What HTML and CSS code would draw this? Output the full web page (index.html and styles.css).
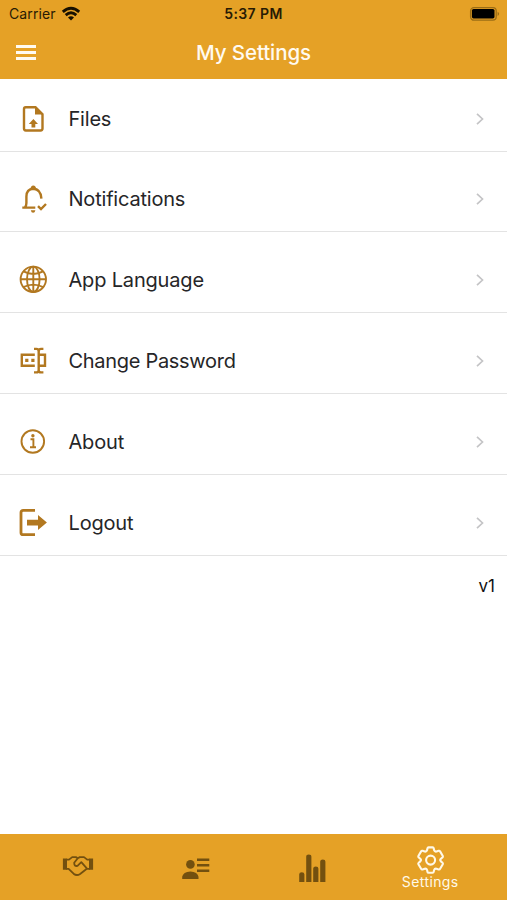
FILE: index.html
```html
<!DOCTYPE html>
<html lang="en">
<head>
<meta charset="utf-8">
<title>My Settings</title>
<link rel="stylesheet" href="styles.css">
</head>
<body>
<header class="header">
  <div class="status">
    <div class="carrier"><span>Carrier</span>
      <svg width="20" height="16" viewBox="0 0 20 16" fill="none" stroke="#181000" stroke-width="2.8"><path d="M1.8 5.9Q10 -1.5 18.2 5.9M4.7 9.1Q10 4.4 15.3 9.1"/><path d="M7 11.4Q10 9 13 11.4L10 14.5Z" fill="#181000" stroke="none"/></svg>
    </div>
    <div class="time">5:37 PM</div>
    <svg class="battery" width="32" height="16" viewBox="0 0 32 16"><rect x="1.6" y="1.6" width="25.6" height="12.6" rx="3.4" fill="none" stroke="#9b6d16" stroke-width="1.3"/><rect x="2.9" y="3" width="22.6" height="9.4" rx="1.6" fill="#000"/><path d="M28.6 5.8Q31.6 7.9 28.6 10Z" fill="#9b6d16"/></svg>
  </div>
  <div class="titlebar">
    <div class="menu"><i></i><i></i><i></i></div>
    <h1>My Settings</h1>
  </div>
</header>
<main class="list">
  <div class="row first">
    <svg class="icon" viewBox="0 0 40 40"><path d="M12.7 8.2H22.5L29.5 15.2V29.6Q29.5 31.5 27.6 31.5H12.8Q11 31.5 11 29.6V10Q11 8.2 12.7 8.2Z"/><path class="solid" d="M22 7.8V15.6H30ZM20.4 20L25 24.9H22.3V28.5H18.5V24.9H15.8Z"/></svg>
    <span class="label">Files</span>
    <svg class="chev" viewBox="0 0 10 14"><path d="M2 1.8L7.5 7L2 12.2"/></svg>
  </div>
  <div class="row second">
    <svg class="icon" viewBox="0 0 40 40"><path d="M9.3 28.6H22.3M12 28.3Q13.4 26.8 13.4 24V17.5Q13.4 10.2 20.3 9.7Q27.8 10 28.4 19.6"/><path class="solid" d="M17.2 10.3Q17.8 6.6 20.3 6.5Q22.8 6.6 23.4 10.3ZM17.8 31.3H22.4Q21.9 33.8 20.1 33.8Q18.3 33.8 17.8 31.3Z"/><path d="M25 27.1L28 30L33 25"/></svg>
    <span class="label">Notifications</span>
    <svg class="chev" viewBox="0 0 10 14"><path d="M2 1.8L7.5 7L2 12.2"/></svg>
  </div>
  <div class="row">
    <svg class="icon thin" viewBox="0 0 40 40"><circle cx="20.3" cy="19.3" r="12.7"/><ellipse cx="20.3" cy="19.3" rx="6.3" ry="12.7"/><path d="M20.3 6.6V32M7.6 19.3H33M10.4 11.4Q20.3 16.5 30.2 11.4M10.4 27.2Q20.3 22.1 30.2 27.2"/></svg>
    <span class="label wide">App Language</span>
    <svg class="chev" viewBox="0 0 10 14"><path d="M2 1.8L7.5 7L2 12.2"/></svg>
  </div>
  <div class="row">
    <svg class="icon" viewBox="0 0 40 40"><path d="M21.8 13.8H8.8V24.7H21.8M25.7 13.8H32V24.7H25.7"/><path d="M21 7.9H23.4Q25.7 7.9 25.7 10.4Q25.7 7.9 28 7.9H30.4M25.7 9.5V29.8M21 31.4H23.4Q25.7 31.4 25.7 28.9Q25.7 31.4 28 31.4H30.4"/><path class="solid" d="M12.2 17.7H15.4V20.9H12.2ZM18.3 17.7H21.5V20.9H18.3Z"/></svg>
    <span class="label tight">Change Password</span>
    <svg class="chev" viewBox="0 0 10 14"><path d="M2 1.8L7.5 7L2 12.2"/></svg>
  </div>
  <div class="row">
    <svg class="icon thin" viewBox="0 0 40 40"><circle cx="19.8" cy="19.5" r="11.3"/><path d="M17.5 17.2H20.4V25M17 25.3H23"/><circle class="solid" cx="19.9" cy="13.7" r="1.7"/></svg>
    <span class="label wide">About</span>
    <svg class="chev" viewBox="0 0 10 14"><path d="M2 1.8L7.5 7L2 12.2"/></svg>
  </div>
  <div class="row">
    <svg class="icon" viewBox="0 0 40 40"><path stroke-width="2.8" d="M22 7.4H10.2Q8 7.4 8 9.5V29.7Q8 31.7 10.2 31.7H22"/><path class="solid" d="M14 16.7H25V11.9L33.9 19.5L25 27.1V22.5H14Z"/></svg>
    <span class="label wide">Logout</span>
    <svg class="chev" viewBox="0 0 10 14"><path d="M2 1.8L7.5 7L2 12.2"/></svg>
  </div>
  <div class="version">v1</div>
</main>
<nav class="tabs">
  <div class="tab shake">
    <svg width="32" height="32" viewBox="0 0 32 32" fill="none" stroke="#73500f" stroke-width="1.8" stroke-linejoin="round" stroke-linecap="round"><path d="M.9 8.5H5V19.8H.9ZM27 8.5H31.1V19.8H27Z" fill="#73500f" stroke="none"/><path d="M4.8 9.6H7L10.2 7.1H13.9L15.8 8.2L17.8 7.1H22L25.2 9.6H27.2M4.8 18.8H6.6L11.6 23.7Q14.7 26.2 18.1 24L24.8 18.8H27.2M15.8 8.2L12.2 12.8Q12.1 16.6 15.5 15.9L19.3 12.2L24.8 18.3"/></svg>
  </div>
  <div class="tab">
    <svg width="32" height="32" viewBox="0 0 32 32" fill="#73500f"><circle cx="11.4" cy="13.4" r="4.3"/><path d="M3.2 28V25.7Q4.1 20.8 11.4 20.4Q18.7 20.8 19.5 25.7V28Z"/><path d="M18 7.4H30.3V10H18ZM18 12.9H30.3V15.4H18ZM18 18.4H30.3V20.9H18Z"/></svg>
  </div>
  <div class="tab">
    <svg width="32" height="32" viewBox="0 0 32 32" fill="#73500f"><path d="M2.2 31V23.3Q2.2 21.2 4.8 21.2Q7.4 21.2 7.4 23.3V31ZM9.2 31V5.7Q9.2 3.4 11.8 3.4Q14.4 3.4 14.4 5.7V31ZM16.2 31V17.6Q16.2 15.4 18.8 15.4Q21.4 15.4 21.4 17.6V31ZM23.2 31V10.5Q23.2 8.4 25.8 8.4Q28.4 8.4 28.4 10.5V31Z"/></svg>
  </div>
  <div class="tab active">
    <svg width="32" height="32" viewBox="0 0 32 32" fill="none" stroke="#fff9e8" stroke-width="2.1" stroke-linejoin="round"><path d="M14.5 2.4H18.7Q19.5 2.4 19.7 3.3L20.1 5.2Q20.7 6.9 22.5 6.5L24.6 5.8Q25.6 5.5 26.1 6.4L28.8 11Q29.2 11.8 28.5 12.4L26.9 13.7Q25.6 15 26.9 16.4L28.5 17.8Q29.2 18.4 28.8 19.2L26.1 23.8Q25.6 24.7 24.6 24.4L22.5 23.7Q20.7 23.3 20.1 25L19.7 26.9Q19.5 27.8 18.7 27.8H14.5Q13.7 27.8 13.5 26.9L13.1 25Q12.5 23.3 10.7 23.7L8.6 24.4Q7.6 24.7 7.1 23.8L4.4 19.2Q4 18.4 4.7 17.8L6.3 16.4Q7.6 15 6.3 13.7L4.7 12.4Q4 11.8 4.4 11L7.1 6.4Q7.6 5.5 8.6 5.8L10.7 6.5Q12.5 6.9 13.1 5.2L13.5 3.3Q13.7 2.4 14.5 2.4Z"/><circle cx="16.6" cy="15.1" r="4.5"/></svg>
    <span>Settings</span>
  </div>
</nav>
</body>
</html>
```
FILE: styles.css
```css
* { box-sizing: border-box; }
body {
  margin: 0;
  height: 900px;
  display: flex;
  flex-direction: column;
  overflow: hidden;
  background: #fff;
  color: #262628;
  font-family: Inter, "Liberation Sans", sans-serif;
}
svg { display: block; flex: none; }
.header { height: 79px; background: #e5a126; flex: none; }
.status {
  height: 27px;
  display: grid;
  grid-template-columns: 1fr auto 1fr;
  align-items: center;
  padding: 0 6px 0 9px;
  color: #281b04;
}
.carrier { display: flex; align-items: center; gap: 5px; font-size: 14px; letter-spacing: 0.1px; }
.time { font-size: 14px; font-weight: 600; letter-spacing: 0.4px; padding-right: 3px; }
.battery { justify-self: end; }
.titlebar {
  height: 52px;
  display: grid;
  grid-template-columns: 1fr auto 1fr;
  align-items: center;
  padding: 0 16px;
}
.menu { display: flex; flex-direction: column; gap: 3px; width: 20px; margin-top: -1px; }
.menu i { height: 3.3px; background: #fffaf0; }
h1 {
  margin: 0;
  color: #fffaf0;
  font-size: 20.5px;
  line-height: 26px;
  font-weight: 550;
  letter-spacing: -0.1px;
}
.list { flex: 1; }
.row {
  height: 81px;
  padding: 15px 22px 0 13px;
  border-bottom: 1px solid #e3e3e3;
  display: flex;
  align-items: center;
}
.first { height: 73px; padding-top: 7px; }
.second { height: 80px; padding-top: 14px; }
.icon {
  width: 40px;
  height: 40px;
  margin-right: 15.5px;
  fill: none;
  stroke: #b27820;
  stroke-width: 2.4;
}
.thin { stroke-width: 1.9; }
.solid { fill: #b27820; stroke: none; }
.label { flex: 1; font-size: 20px; line-height: 26px; letter-spacing: -0.2px; }
.wide { letter-spacing: -0.18px; }
.tight { letter-spacing: -0.3px; }
.chev { width: 10px; height: 14px; fill: none; stroke: #c4c4c6; stroke-width: 1.7; }
.version {
  padding: 18px 12px 0 0;
  text-align: right;
  font-size: 17px;
  line-height: 24px;
  color: #111;
}
.tabs {
  height: 66px;
  flex: none;
  padding: 0 18px 0 19px;
  background: #e5a126;
  display: grid;
  grid-template-columns: repeat(4, 1fr);
}
.tab { display: flex; flex-direction: column; align-items: center; padding-top: 17px; }
.shake { padding-top: 16px; }
.active { padding-top: 11px; color: #fff9e8; font-size: 14px; line-height: 18px; }
.active span { margin-top: -4px; letter-spacing: 0.4px; }
```
